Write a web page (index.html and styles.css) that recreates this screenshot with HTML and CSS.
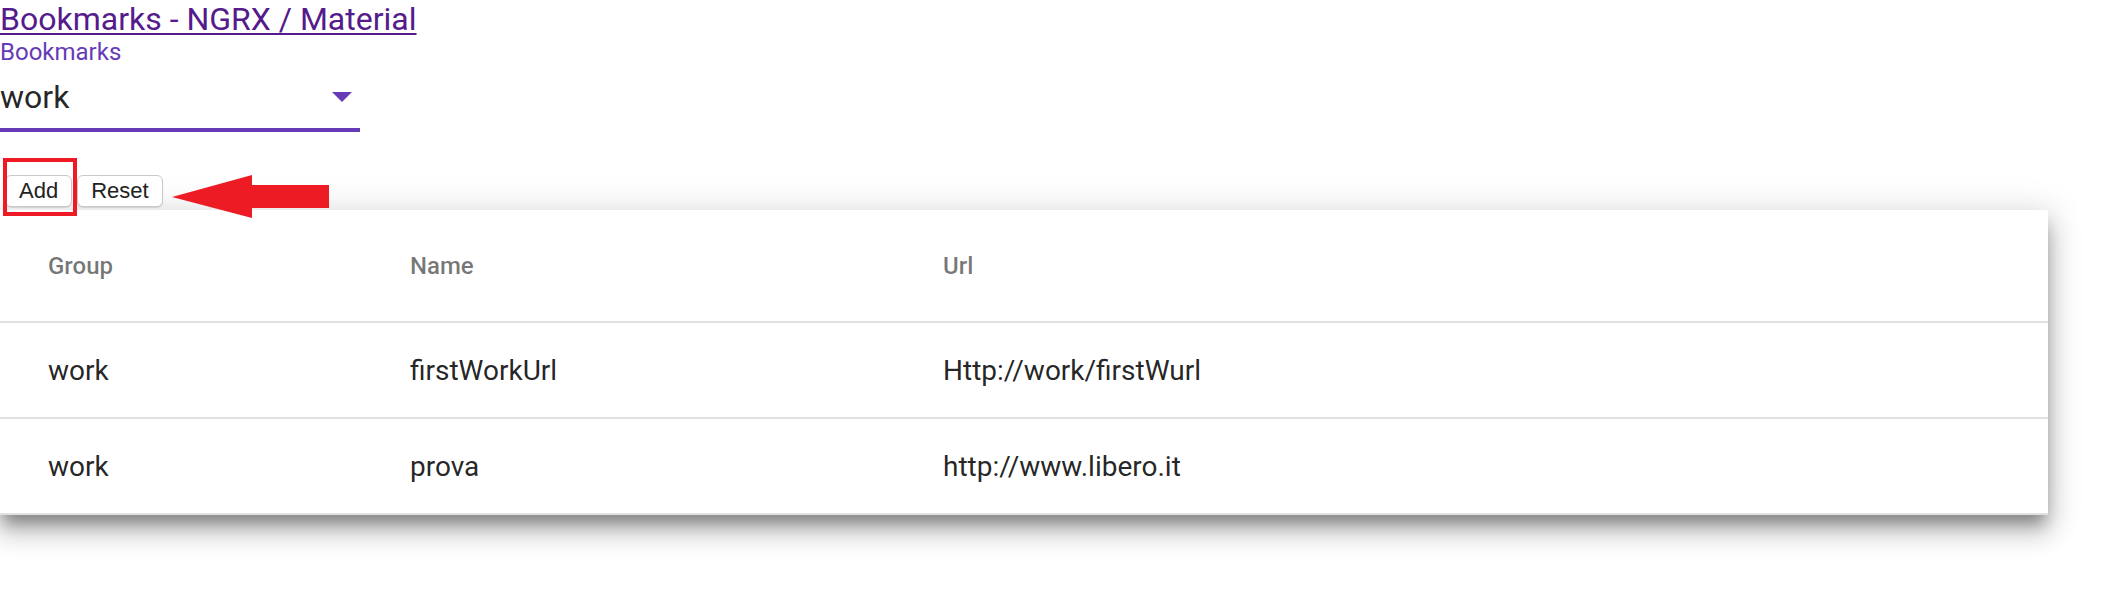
FILE: index.html
```html
<!DOCTYPE html>
<html>
<head>
<meta charset="utf-8">
<title>Bookmarks - NGRX / Material</title>
<link rel="stylesheet" href="styles.css">
</head>
<body>
<a class="title" href="#">Bookmarks - NGRX / Material</a>
<div class="field">
  <div class="field-label">Bookmarks</div>
  <div class="select-row">
    <span class="select-value">work</span>
    <span class="select-arrow"></span>
  </div>
  <div class="field-underline"></div>
</div>
<div class="actions">
  <button class="btn">Add</button>
  <button class="btn">Reset</button>
  <div class="highlight-box"></div>
  <svg class="pointer-arrow" width="162" height="48" viewBox="0 0 162 48">
    <polygon points="2,25 82,3 82,13 159,13 159,36 82,36 82,46" fill="#ed1c24"/>
  </svg>
</div>
<div class="card">
  <table class="grid">
    <thead>
      <tr class="head-row">
        <th class="c-group">Group</th>
        <th class="c-name">Name</th>
        <th class="c-url">Url</th>
      </tr>
    </thead>
    <tbody>
      <tr class="body-row">
        <td class="c-group">work</td>
        <td class="c-name">firstWorkUrl</td>
        <td class="c-url">Http://work/firstWurl</td>
      </tr>
      <tr class="body-row">
        <td class="c-group">work</td>
        <td class="c-name">prova</td>
        <td class="c-url">http://www.libero.it</td>
      </tr>
    </tbody>
  </table>
</div>
</body>
</html>
```

FILE: styles.css
```css
html, body {
  margin: 0;
  padding: 0;
  background: #ffffff;
}
body {
  font-family: Roboto, "Noto Sans", sans-serif;
  color: rgba(0, 0, 0, 0.87);
  min-height: 600px;
}
.title {
  display: inline-block;
  font-size: 32px;
  line-height: 38px;
  color: #551a8b;
  text-decoration: underline;
  text-decoration-thickness: 2px;
  text-underline-offset: 3px;
}
.field {
  width: 360px;
}
.field-label {
  font-size: 24px;
  line-height: 28px;
  color: #673ab7;
}
.select-row {
  display: flex;
  align-items: center;
  justify-content: space-between;
  padding-top: 12px;
  height: 38px;
}
.select-value {
  font-size: 32px;
  line-height: 38px;
  color: rgba(0, 0, 0, 0.87);
}
.select-arrow {
  width: 0;
  height: 0;
  margin-right: 8px;
  border-left: 10px solid transparent;
  border-right: 10px solid transparent;
  border-top: 10px solid #673ab7;
}
.field-underline {
  margin-top: 12px;
  height: 4px;
  background: #673ab7;
}
.actions {
  position: relative;
  display: flex;
  gap: 5px;
  margin-top: 43px;
  padding-left: 5px;
}
.btn {
  height: 32px;
  padding: 0 13px;
  font-family: "Liberation Sans", Arial, sans-serif;
  font-size: 22px;
  color: #222222;
  background: #ffffff;
  border: 1px solid #c9c9c9;
  border-radius: 6px;
  box-shadow: 0 1px 1px rgba(0, 0, 0, 0.12);
}
.highlight-box {
  position: absolute;
  left: 3px;
  top: -17px;
  width: 66px;
  height: 50px;
  border: 4px solid #ed1c24;
}
.pointer-arrow {
  position: absolute;
  left: 170px;
  top: -3px;
}
.card {
  margin-top: 3px;
  margin-right: 54px;
  background: #ffffff;
  box-shadow: 0 12px 14px -4px rgba(0, 0, 0, 0.32),
              0 18px 24px 2px rgba(0, 0, 0, 0.16),
              0 4px 30px 6px rgba(0, 0, 0, 0.12);
}
.grid {
  width: 100%;
  border-collapse: collapse;
  table-layout: fixed;
}
.grid th, .grid td {
  text-align: left;
  padding: 0;
  border-bottom: 2px solid #e0e0e0;
  white-space: nowrap;
}
.head-row {
  height: 112px;
}
.head-row th {
  font-size: 24px;
  font-weight: 500;
  color: rgba(0, 0, 0, 0.54);
}
.body-row {
  height: 96px;
}
.body-row td {
  font-size: 28px;
  color: rgba(0, 0, 0, 0.87);
}
.c-group {
  width: 362px;
  padding-left: 48px !important;
}
.c-name {
  width: 533px;
}
.c-url {
  padding-right: 48px !important;
}
```
